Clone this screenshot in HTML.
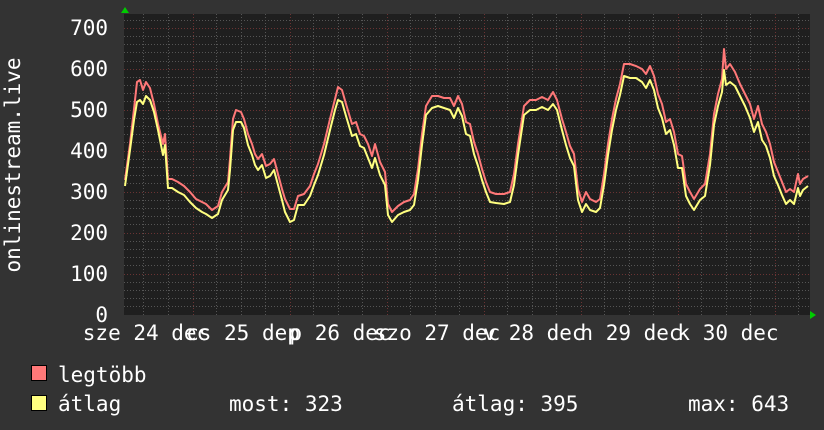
<!DOCTYPE html>
<html><head><meta charset="utf-8"><style>
html,body{margin:0;padding:0;background:#333;}
svg{display:block}
text{font-family:"DejaVu Sans Mono","Liberation Mono",monospace;fill:#fff}
</style></head><body>
<svg width="824" height="430" viewBox="0 0 824 430" xmlns="http://www.w3.org/2000/svg">
<rect width="824" height="430" fill="#333"/>
<rect x="124" y="14" width="686" height="301" fill="#1f1f1f"/>
<g stroke="#555" stroke-width="1" stroke-dasharray="1,2">
<path d="M124 20.5H810M124 36.5H810M124 44.5H810M124 52.5H810M124 61.5H810M124 77.5H810M124 85.5H810M124 93.5H810M124 101.5H810M124 118.5H810M124 126.5H810M124 134.5H810M124 142.5H810M124 159.5H810M124 167.5H810M124 175.5H810M124 183.5H810M124 200.5H810M124 208.5H810M124 216.5H810M124 224.5H810M124 241.5H810M124 249.5H810M124 257.5H810M124 265.5H810M124 282.5H810M124 290.5H810M124 298.5H810M124 306.5H810"/>
<path d="M143.5 14V315M168.5 14V315M216.5 14V315M241.5 14V315M265.5 14V315M313.5 14V315M338.5 14V315M362.5 14V315M410.5 14V315M435.5 14V315M459.5 14V315M507.5 14V315M532.5 14V315M556.5 14V315M604.5 14V315M629.5 14V315M653.5 14V315M701.5 14V315M726.5 14V315M750.5 14V315M798.5 14V315"/>
</g>
<g stroke="#6a3333" stroke-width="1" stroke-dasharray="1,2">
<path d="M124 28.5H810M124 69.5H810M124 110.5H810M124 151.5H810M124 192.5H810M124 233.5H810M124 274.5H810"/>
<path d="M193.5 14V315M290.5 14V315M387.5 14V315M484.5 14V315M581.5 14V315M678.5 14V315M775.5 14V315"/>
</g>
<g fill="none" stroke-width="2" stroke-linejoin="round">
<polyline transform="translate(0,-6)" stroke="#ff7878" points="125,186 130,150 134,115 137,88 140,86 143,96 146,88 150,94 154,110 158,130 163,150 165,140 168,185 172,185 178,188 184,192 190,198 196,205 202,208 206,210 212,216 218,212 222,198 228,188 230,165 233,125 236,116 241,118 244,125 248,140 252,150 255,160 258,165 262,160 266,172 270,170 274,165 278,180 282,195 285,205 290,215 294,215 298,202 304,200 310,192 314,180 318,170 324,150 330,125 335,105 338,93 342,96 346,110 352,130 356,128 360,140 364,142 368,150 372,162 375,150 380,168 385,178 388,210 392,218 398,212 404,208 410,206 414,200 418,175 422,140 426,112 432,102 438,102 444,104 450,104 454,112 458,102 462,110 466,128 470,130 474,148 478,160 482,175 486,188 490,198 496,200 504,200 510,198 514,180 518,150 524,112 530,106 536,106 542,103 548,106 553,98 557,106 562,125 566,138 570,152 574,160 578,195 582,208 586,198 590,205 596,208 600,205 604,180 608,150 612,125 616,105 620,90 624,70 630,70 636,72 642,75 646,80 650,72 654,82 658,100 662,110 666,128 670,125 674,138 678,160 682,162 686,190 690,198 694,205 700,195 705,190 710,160 714,120 718,100 722,85 724,55 726,75 730,70 735,78 740,90 745,100 750,110 754,125 758,112 762,130 766,138 770,150 774,168 778,178 782,188 786,198 790,195 794,198 798,180 800,190 803,185 808,182"/>
<polyline stroke="#ffff80" points="125,186 130,150 134,120 137,102 140,100 143,104 146,96 150,100 154,112 158,130 163,155 165,145 168,188 172,188 178,192 184,195 190,202 196,208 202,212 206,214 212,218 218,214 222,200 228,190 230,170 233,130 236,122 241,122 244,128 248,145 252,155 255,165 258,170 262,165 266,178 270,176 274,170 278,185 282,200 285,212 290,222 294,220 298,205 304,205 310,196 314,185 318,175 324,155 330,130 335,110 338,100 342,102 346,116 352,136 356,134 360,146 364,148 368,158 372,168 375,158 380,175 385,185 388,215 392,222 398,215 404,212 410,210 414,205 418,180 422,145 426,115 432,108 438,106 444,108 450,110 454,118 458,108 462,116 466,134 470,136 474,154 478,166 482,180 486,192 490,202 496,203 504,204 510,202 514,185 518,155 524,115 530,110 536,110 542,107 548,110 553,104 557,110 562,130 566,145 570,158 574,166 578,200 582,212 586,204 590,210 596,212 600,208 604,185 608,155 612,130 616,110 620,95 624,76 630,78 636,78 642,82 646,88 650,80 654,90 658,108 662,118 666,134 670,130 674,145 678,168 682,168 686,196 690,204 694,210 700,200 705,196 710,165 714,125 718,106 722,92 724,70 726,85 730,82 735,86 740,96 745,106 750,118 754,132 758,122 762,140 766,146 770,158 774,176 778,185 782,195 786,204 790,200 794,204 798,188 800,196 803,190 808,186"/>
</g>
<polygon points="121,13 125,7 129,13" fill="#0c0"/>
<polygon points="810,311 816,315 810,319" fill="#0c0"/>
<g font-size="21" text-anchor="end">
<text x="108" y="35">700</text><text x="108" y="76">600</text><text x="108" y="117">500</text><text x="108" y="158">400</text><text x="108" y="199">300</text><text x="108" y="240">200</text><text x="108" y="281">100</text><text x="108" y="322">0</text>
</g>
<text transform="translate(20,165) rotate(-90)" font-size="21" text-anchor="middle">onlinestream.live</text>
<g font-size="21" text-anchor="middle">
<text x="146" y="340">sze 24 dec</text><text x="243" y="340">cs 25 dep</text><text x="340" y="340">p 26 dec</text><text x="437" y="340">szo 27 dec</text><text x="534" y="340">v 28 dec</text><text x="631" y="340">h 29 dec</text><text x="728" y="340">k 30 dec</text>
</g>
<rect x="31.5" y="365.5" width="15" height="15" fill="#ff7878" stroke="#000"/>
<rect x="31.5" y="395.5" width="15" height="15" fill="#ffff80" stroke="#000"/>
<g font-size="21">
<text x="58" y="382">legtöbb</text><text x="58" y="411">átlag</text>
<text x="229" y="411">most: 323</text><text x="452" y="411">átlag: 395</text><text x="688" y="411">max: 643</text>
</g>
</svg>
</body></html>
